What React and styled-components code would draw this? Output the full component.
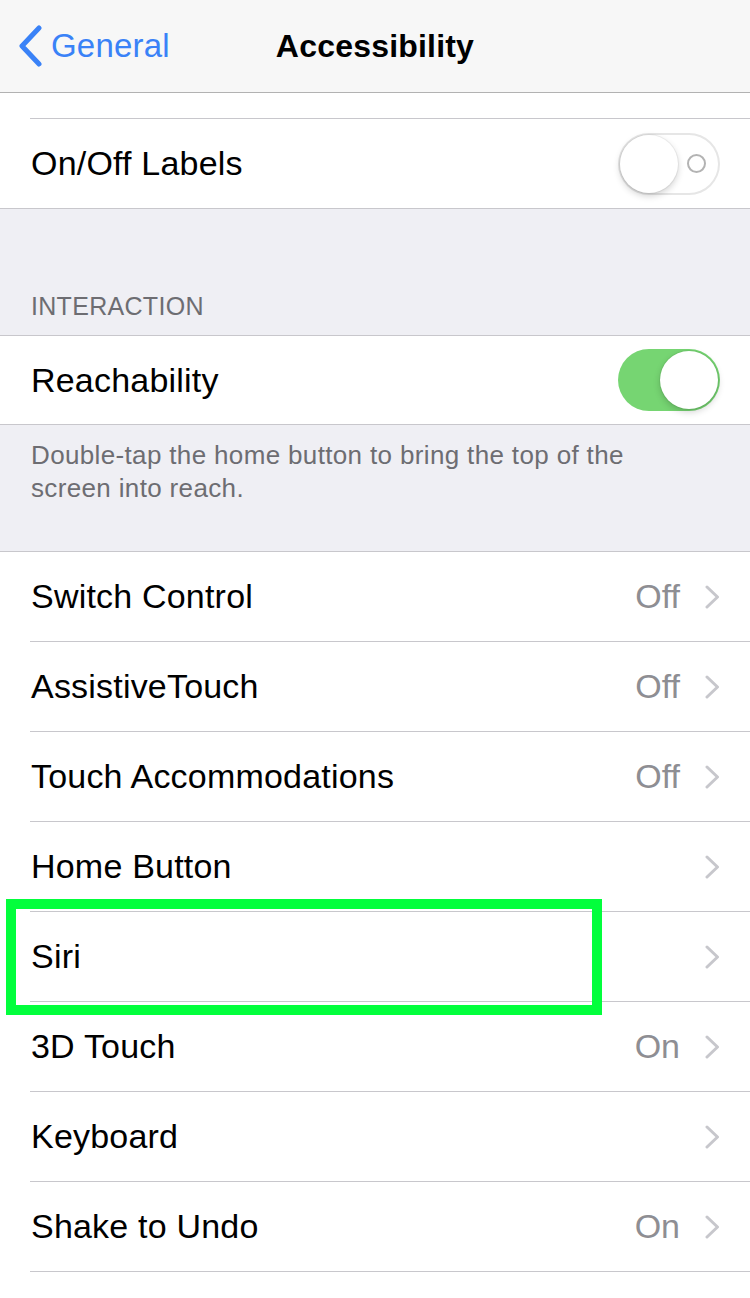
import React from 'react'
import styled, { createGlobalStyle } from 'styled-components'

const GlobalStyle = createGlobalStyle`
  html, body {
    margin: 0;
    padding: 0;
    background: #efeff4;
  }
  body {
    font-family: "Liberation Sans", Arial, sans-serif;
    -webkit-font-smoothing: antialiased;
  }
`;

const Screen = styled.div`
  width: 750px;
  height: 1298px;
  overflow: hidden;
  background: #efeff4;
`;

const NavBar = styled.div`
  height: 92px;
  background: #f7f7f7;
  border-bottom: 1px solid #b2b2b2;
  display: grid;
  grid-template-columns: 1fr auto 1fr;
  align-items: center;
`;

const BackButton = styled.div`
  display: flex;
  align-items: center;
  gap: 7px;
  padding-left: 18px;
  color: #3a82f7;
  font-size: 33px;
  letter-spacing: 0.2px;
`;

const Title = styled.div`
  font-size: 32px;
  font-weight: 700;
  color: #000;
  letter-spacing: 0.2px;
`;

const Group = styled.div`
  background: #fff;
  border-bottom: 1px solid #c8c7cc;
  border-top: ${p => (p.$top ? '1px solid #c8c7cc' : 'none')};
`;

const Clipped = styled.div`
  height: 25px;
`;

const Divider = styled.div`
  height: 1px;
  margin-left: 30px;
  background: #c8c7cc;
`;

const Row = styled.div`
  position: relative;
  height: ${p => p.$h || 89}px;
  display: flex;
  align-items: center;
  padding: 0 30px 0 31px;
`;

const Label = styled.div`
  flex: 1;
  font-size: 34px;
  color: #000;
  letter-spacing: 0.2px;
`;

const Value = styled.div`
  font-size: 34px;
  color: #8e8e93;
  margin-right: 25px;
`;

const SectionHeader = styled.div`
  height: 126px;
  display: flex;
  align-items: flex-end;
  padding: 0 31px 14px;
  box-sizing: border-box;
  font-size: 25px;
  color: #6d6d72;
  letter-spacing: 0.3px;
`;

const Footer = styled.div`
  height: 126px;
  box-sizing: border-box;
  padding: 14px 80px 0 31px;
  font-size: 26px;
  line-height: 33px;
  color: #6d6d72;
  letter-spacing: 0.35px;
`;

const Switch = styled.div`
  width: 102px;
  height: 62px;
  box-sizing: border-box;
  border-radius: 31px;
  padding: 2px;
  display: flex;
  flex-direction: ${p => (p.$on ? 'row-reverse' : 'row')};
  align-items: center;
  justify-content: space-between;
  background: ${p => (p.$on ? '#76d572' : '#fff')};
  box-shadow: ${p => (p.$on ? 'none' : 'inset 0 0 0 2px #e6e6e6')};
`;

const Knob = styled.div`
  width: 58px;
  height: 58px;
  border-radius: 50%;
  background: #fff;
  box-shadow: 0 3px 7px rgba(0, 0, 0, 0.18), 0 0 0 1px rgba(0, 0, 0, 0.05);
`;

const OffMark = styled.div`
  width: 15px;
  height: 15px;
  border: 2px solid #b3b3b3;
  border-radius: 50%;
  margin-right: 12px;
`;

const Highlight = styled.div`
  position: absolute;
  left: 6px;
  top: -13px;
  width: 596px;
  bottom: -14px;
  box-sizing: border-box;
  border: 10px solid #02ff3c;
  pointer-events: none;
`;

const BackChevron = () => (
  <svg width="26" height="42" viewBox="0 0 26 42">
    <polyline points="21,3 4,21 21,39" fill="none" stroke="#3a82f7" strokeWidth="5" strokeLinecap="round" strokeLinejoin="round" />
  </svg>
);

const Chevron = () => (
  <svg width="15" height="24" viewBox="0 0 15 24">
    <polyline points="2,2 12.5,12 2,22" fill="none" stroke="#c7c7cc" strokeWidth="3" strokeLinecap="round" strokeLinejoin="round" />
  </svg>
);

const items = [
  { label: 'Switch Control', value: 'Off' },
  { label: 'AssistiveTouch', value: 'Off' },
  { label: 'Touch Accommodations', value: 'Off' },
  { label: 'Home Button' },
  { label: 'Siri', marked: true },
  { label: '3D Touch', value: 'On' },
  { label: 'Keyboard' },
  { label: 'Shake to Undo', value: 'On' },
];

export default function App() {
  return (
    <Screen>
      <GlobalStyle />
      <NavBar>
        <BackButton>
          <BackChevron />
          General
        </BackButton>
        <Title>Accessibility</Title>
        <div />
      </NavBar>

      <Group>
        <Clipped />
        <Divider />
        <Row>
          <Label>On/Off Labels</Label>
          <Switch>
            <Knob />
            <OffMark />
          </Switch>
        </Row>
      </Group>

      <SectionHeader>INTERACTION</SectionHeader>
      <Group $top>
        <Row $h={88}>
          <Label>Reachability</Label>
          <Switch $on>
            <Knob />
          </Switch>
        </Row>
      </Group>
      <Footer>Double-tap the home button to bring the top of the screen into reach.</Footer>

      <Group $top>
        {items.map((it, i) => (
          <React.Fragment key={it.label}>
            {i > 0 && <Divider />}
            <Row>
              <Label>{it.label}</Label>
              {it.value && <Value>{it.value}</Value>}
              <Chevron />
              {it.marked && <Highlight />}
            </Row>
          </React.Fragment>
        ))}
        <Divider />
        <Row />
      </Group>
    </Screen>
  )
}
